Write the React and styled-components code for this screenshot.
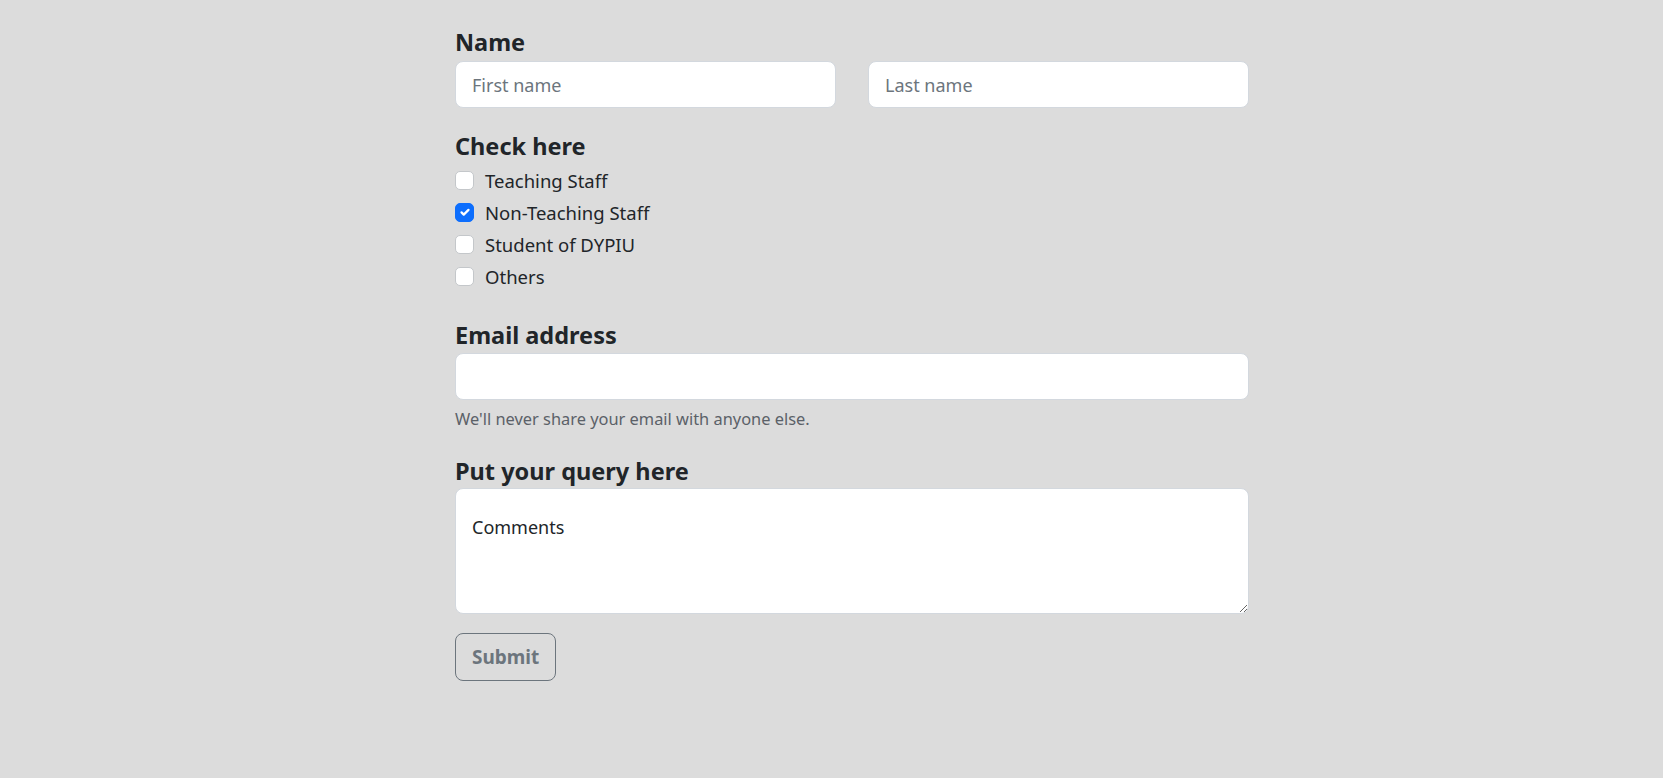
import React, { useState } from "react";
import styled, { createGlobalStyle } from "styled-components";

const GlobalStyle = createGlobalStyle`
  html, body {
    margin: 0;
    padding: 0;
    background: #dcdcdc;
  }
  body {
    font-family: "Noto Sans", "Open Sans", sans-serif;
    color: #212529;
  }
  * {
    box-sizing: border-box;
  }
`;

const Form = styled.form`
  width: 794px;
  margin-left: 455px;
  padding-top: 26px;
  padding-bottom: 40px;
  display: flex;
  flex-direction: column;
`;

const Heading = styled.label`
  display: block;
  font-size: 23.5px;
  font-weight: 700;
  line-height: 32px;
  margin-top: ${({ $top }) => $top || 0}px;
  margin-bottom: ${({ $gap }) => ($gap == null ? 3 : $gap)}px;
  color: #212529;
`;

const NameRow = styled.div`
  display: grid;
  grid-template-columns: 1fr 1fr;
  gap: 32px;
`;

const TextInput = styled.input`
  display: block;
  width: 100%;
  height: 47px;
  padding: 8px 16px;
  font-family: inherit;
  font-size: 18px;
  line-height: 27px;
  color: #212529;
  background: #fff;
  border: 1px solid #d3d8de;
  border-radius: 8px;
  outline: none;

  &::placeholder {
    color: #6c757d;
  }
`;

const CheckList = styled.div`
  display: flex;
  flex-direction: column;
  margin-top: -1px;
`;

const CheckRow = styled.label`
  display: flex;
  align-items: center;
  gap: 11px;
  height: 32px;
  font-size: 18.5px;
  color: #212529;
  cursor: pointer;
`;

const Box = styled.span`
  width: 19px;
  height: 19px;
  flex: none;
  display: flex;
  align-items: center;
  justify-content: center;
  border-radius: 5px;
  border: 1px solid ${({ $on }) => ($on ? "#0d6efd" : "#c4c7ca")};
  background: ${({ $on }) => ($on ? "#0d6efd" : "#fff")};
`;

const HelpText = styled.div`
  font-size: 16.4px;
  line-height: 24px;
  color: #5b6168;
  margin-top: 7px;
`;

const Comments = styled.textarea`
  display: block;
  width: 100%;
  height: 126px;
  padding: 25px 16px 8px;
  font-family: inherit;
  font-size: 18px;
  line-height: 27px;
  color: #212529;
  background: #fff;
  border: 1px solid #d3d8de;
  border-radius: 8px;
  outline: none;

  &::placeholder {
    color: #212529;
  }
`;

const SubmitButton = styled.button`
  align-self: flex-start;
  margin-top: 19px;
  height: 48px;
  padding: 0 16px;
  font-family: inherit;
  font-size: 19px;
  font-weight: 700;
  color: #6c757d;
  background: transparent;
  border: 1px solid #6c757d;
  border-radius: 8px;
  cursor: pointer;
`;

const options = [
  "Teaching Staff",
  "Non-Teaching Staff",
  "Student of DYPIU",
  "Others",
];

const Check = ({ label, on, onToggle }) => (
  <CheckRow onClick={onToggle}>
    <Box $on={on}>
      {on && (
        <svg width="14" height="14" viewBox="0 0 20 20">
          <path
            d="M5 10.5l3.2 3.2L15 7"
            fill="none"
            stroke="#fff"
            strokeWidth="3.2"
            strokeLinecap="round"
            strokeLinejoin="round"
          />
        </svg>
      )}
    </Box>
    {label}
  </CheckRow>
);

export default function App() {
  const [checked, setChecked] = useState({ "Non-Teaching Staff": true });

  const toggle = (name) =>
    setChecked((prev) => ({ ...prev, [name]: !prev[name] }));

  return (
    <>
      <GlobalStyle />
      <Form onSubmit={(e) => e.preventDefault()}>
        <Heading>Name</Heading>
        <NameRow>
          <TextInput type="text" placeholder="First name" />
          <TextInput type="text" placeholder="Last name" />
        </NameRow>

        <Heading $top={22}>Check here</Heading>
        <CheckList>
          {options.map((opt) => (
            <Check
              key={opt}
              label={opt}
              on={!!checked[opt]}
              onToggle={() => toggle(opt)}
            />
          ))}
        </CheckList>

        <Heading $top={27} $gap={2}>
          Email address
        </Heading>
        <TextInput type="email" />
        <HelpText>We'll never share your email with anyone else.</HelpText>

        <Heading $top={24} $gap={1}>
          Put your query here
        </Heading>
        <Comments placeholder="Comments" />

        <SubmitButton type="submit">Submit</SubmitButton>
      </Form>
    </>
  );
}
